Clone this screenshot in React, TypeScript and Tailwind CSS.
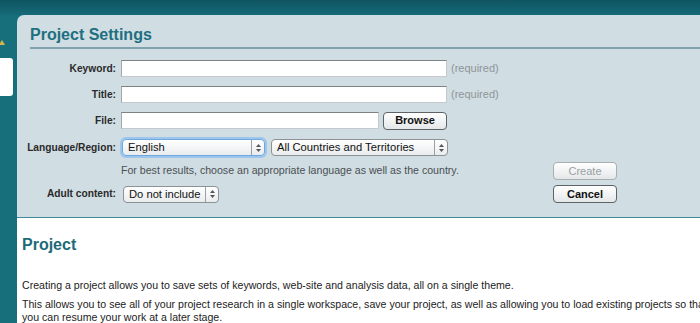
import React from "react";

const font = "font-['Liberation_Sans',Arial,sans-serif]";

function TextInput({ w }: { w: string }) {
  return (
    <div
      className={`${w} h-[17px] bg-white border border-[#c3c9cc] border-t-[#7d8285] border-l-[#a3a8ab]`}
    />
  );
}

function Arrows() {
  return (
    <svg width="7" height="10" viewBox="0 0 7 10" className="block">
      <path d="M3.5 1 L6 4 L1 4 Z" fill="#555" />
      <path d="M3.5 9 L6 6 L1 6 Z" fill="#555" />
    </svg>
  );
}

function Select({
  label,
  w,
  focus,
}: {
  label: string;
  w: string;
  focus?: boolean;
}) {
  return (
    <div
      className={`${w} h-[17px] flex items-stretch rounded-[4px] border bg-gradient-to-b from-white to-[#e9ecee] ${
        focus
          ? "border-[#6fa8dc] ring-2 ring-[#9cc6ee]"
          : "border-[#8c9295]"
      }`}
    >
      <div className="flex-1 pl-[5px] text-[11.2px] leading-[15px] text-[#111] whitespace-nowrap overflow-hidden">
        {label}
      </div>
      <div className="w-[13px] shrink-0 border-l border-[#9aa0a3] flex items-center justify-center">
        <Arrows />
      </div>
    </div>
  );
}

function Button({
  label,
  disabled,
}: {
  label: string;
  disabled?: boolean;
}) {
  return (
    <div
      className={`w-[64px] h-[18px] rounded-[4px] border flex items-center justify-center text-[11px] bg-gradient-to-b from-white to-[#e4e7e9] ${
        disabled
          ? "border-[#a9aeb1] text-[#9a9fa2]"
          : "border-[#5d6366] text-[#111] font-bold"
      }`}
    >
      {label}
    </div>
  );
}

function Label({ children }: { children: React.ReactNode }) {
  return (
    <div className="w-[99px] shrink-0 text-right text-[10.2px] font-bold text-[#2a2a2a] whitespace-nowrap">
      {children}
    </div>
  );
}

function Row({
  label,
  children,
  className = "",
}: {
  label: string;
  children: React.ReactNode;
  className?: string;
}) {
  return (
    <div className={`flex items-center ${className}`}>
      <Label>{label}</Label>
      <div className="ml-[5px] flex items-center">{children}</div>
    </div>
  );
}

export default function App() {
  return (
    <div className={`w-[700px] h-[323px] overflow-hidden bg-[#176f7c] flex flex-col ${font}`}>
      <div className="h-[15px] shrink-0 bg-gradient-to-b from-[#0f5561] to-[#156a77]" />
      <div className="flex flex-1 min-h-0">
        {/* left strip */}
        <div className="w-[17px] shrink-0 flex flex-col">
          <div className="mt-[25px] h-0 w-0 border-l-[3px] border-r-[3px] border-b-[5px] border-l-transparent border-r-transparent border-b-[#d9b44a] -ml-[1px]" />
          <div className="mt-[13px] w-[13px] h-[38px] bg-white rounded-r-[3px]" />
        </div>

        <div className="flex-1 flex flex-col min-w-0">
          {/* settings panel */}
          <div className="bg-[#d0dde3] rounded-tl-[7px] border-b border-[#3f8a98] h-[203px] shrink-0">
            <div className="pl-[13px] pt-[10px]">
              <div className="text-[16px] font-bold text-[#1e6f80] leading-[20px] pb-[2px] border-b-2 border-[#7ea3ae]">
                Project Settings
              </div>
            </div>

            <div className="mt-[11px] flex flex-col">
              <Row label="Keyword:" className="h-[17px]">
                <TextInput w="w-[326px]" />
                <span className="ml-[4px] text-[11px] text-[#8e9598]">(required)</span>
              </Row>
              <Row label="Title:" className="h-[17px] mt-[9px]">
                <TextInput w="w-[326px]" />
                <span className="ml-[4px] text-[11px] text-[#8e9598]">(required)</span>
              </Row>
              <Row label="File:" className="h-[17px] mt-[9px]">
                <TextInput w="w-[258px]" />
                <div className="ml-[4px]">
                  <Button label="Browse" />
                </div>
              </Row>
              <Row label="Language/Region:" className="h-[17px] mt-[10px]">
                <div className="ml-[1px]">
                  <Select label="English" w="w-[143px]" focus />
                </div>
                <div className="ml-[6px]">
                  <Select label="All Countries and Territories" w="w-[177px]" />
                </div>
              </Row>
              <div className="flex items-center h-[18px] mt-[6px]">
                <div className="w-[104px] shrink-0" />
                <div className="w-[496px] flex items-center">
                  <span className="text-[10.6px] text-[#4a4f52] whitespace-nowrap">
                    For best results, choose an appropriate language as well as the country.
                  </span>
                  <div className="ml-auto">
                    <Button label="Create" disabled />
                  </div>
                </div>
              </div>
              <div className="flex items-center h-[18px] mt-[5px]">
                <Label>Adult content:</Label>
                <div className="ml-[5px] w-[496px] flex items-center">
                  <div className="ml-[2px]">
                    <Select label="Do not include" w="w-[96px]" />
                  </div>
                  <div className="ml-auto">
                    <Button label="Cancel" />
                  </div>
                </div>
              </div>
            </div>
          </div>

          {/* project description */}
          <div className="flex-1 bg-white pl-[5px] pt-[17px]">
            <div className="text-[16px] font-bold text-[#1d6b78] leading-[20px]">Project</div>
            <p className="mt-[24px] text-[10.6px] leading-[13px] text-[#222] whitespace-nowrap">
              Creating a project allows you to save sets of keywords, web-site and analysis data, all on a single theme.
            </p>
            <p className="mt-[6px] text-[10.6px] leading-[13px] text-[#222] whitespace-nowrap">
              This allows you to see all of your project research in a single workspace, save your project, as well as allowing you to load existing projects so that
              <br />
              you can resume your work at a later stage.
            </p>
          </div>
        </div>
      </div>
    </div>
  );
}
